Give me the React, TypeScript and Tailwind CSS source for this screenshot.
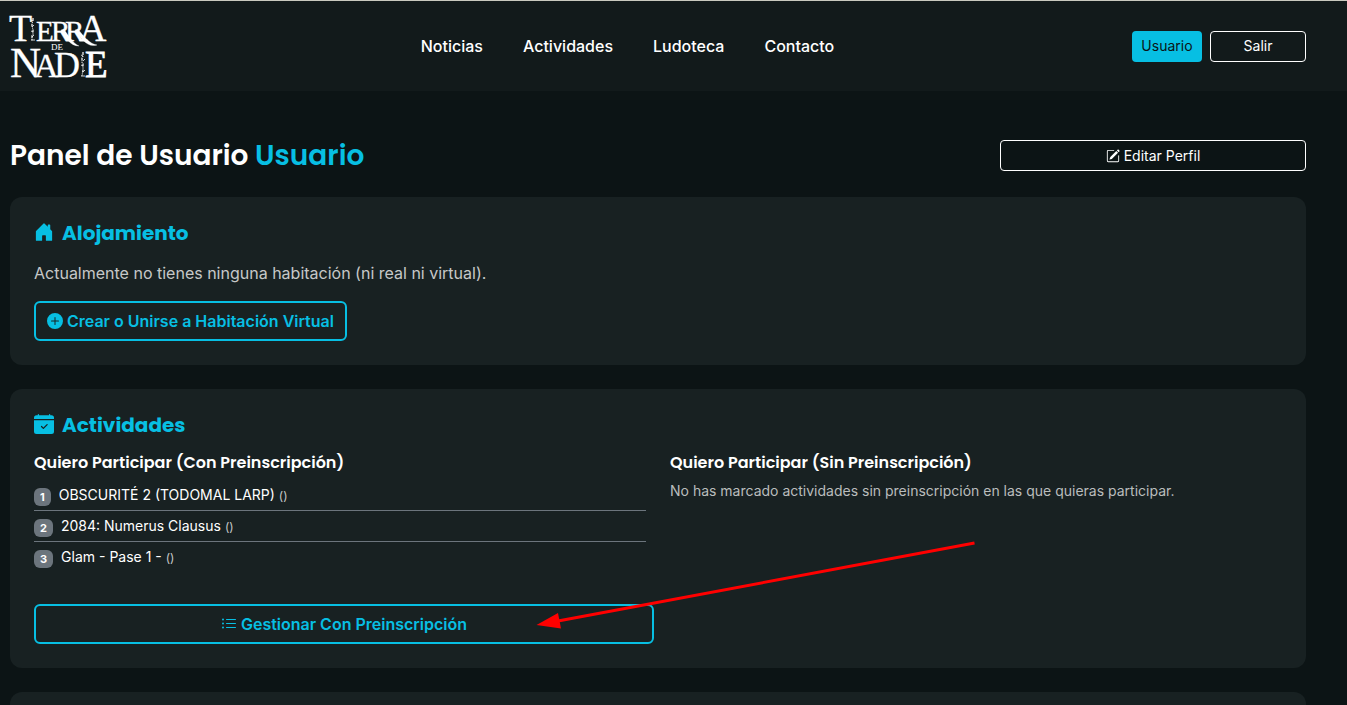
import type { ReactNode } from 'react';
import {
  BsCalendarCheckFill,
  BsHouseDoorFill,
  BsListUl,
  BsPencilSquare,
  BsPlusCircleFill,
} from 'react-icons/bs';

const navLinks = ['Noticias', 'Actividades', 'Ludoteca', 'Contacto'];
const activities = ['OBSCURITÉ 2 (TODOMAL LARP)', '2084: Numerus Clausus', 'Glam - Pase 1 -'];

function Logo() {
  return (
    <svg
      width="97"
      height="66"
      viewBox="0 0 97 66"
      fill="#fff"
      stroke="#fff"
      strokeWidth="0.3"
      className="overflow-visible font-['Liberation_Serif',serif]"
      role="img"
      aria-label="Tierra de Nadie"
    >
      <text x="-1" y="28" fontSize="38">T</text>
      <text x="26" y="28" fontSize="29">E</text>
      <text x="41" y="28" fontSize="29">R</text>
      <text x="55" y="28" fontSize="29">R</text>
      <text x="69" y="28" fontSize="38">A</text>
      <text x="41" y="37" fontSize="9" strokeWidth="0">DE</text>
      <text x="0" y="64" fontSize="43">N</text>
      <text x="24" y="64" fontSize="34">A</text>
      <text x="44" y="64" fontSize="36">D</text>
      <text x="75" y="64" fontSize="37" strokeWidth="0.8">E</text>
      <path d="M51 17 C56 25 60 33 69 33 C63 30 59 24 54 16Z M65 17 C71 25 77 35 87 32 C80 31 74 24 68 16Z" />
      <path
        d="M23 5v3l-1 2v4l1 2v5l-1 2v5M73 39v4l-1 2v4l1 2v6l-1 6"
        fill="none"
        strokeWidth="1.2"
        strokeDasharray="3 1 1 1"
      />
      <path
        d="M21 7l2 1M24 12l-2 2M21 18l2 1M24 22l-2 2M21 27h4M71 42l2 1M75 46l-2 2M71 52l2 1M75 57l-2 2M71 63h4"
        fill="none"
        strokeWidth="0.8"
      />
    </svg>
  );
}

function Card({ children }: { children?: ReactNode }) {
  return <section className="rounded-xl bg-[#182122] p-6">{children}</section>;
}

function SectionTitle({ icon, children }: { icon: ReactNode; children: ReactNode }) {
  return (
    <h2 className="flex h-6 gap-2 pt-px font-['Poppins','Inter',sans-serif] text-xl leading-[22px] font-bold text-[#07bfe3]">
      {icon}
      {children}
    </h2>
  );
}

function OutlineButton({ icon, children }: { icon: ReactNode; children: ReactNode }) {
  return (
    <button
      type="button"
      className="flex h-10 items-center justify-center gap-1 rounded-md border-2 border-[#07bfe3] px-[11px] text-base font-semibold text-[#07bfe3]"
    >
      {icon}
      {children}
    </button>
  );
}

export default function App() {
  return (
    <div className="relative h-screen overflow-hidden bg-[#0c1415] font-['Inter',sans-serif] text-white">
      <header className="flex h-[91px] items-center justify-between border-t border-[#c9c9bf] bg-[#121a1b] pr-[41px] pl-[10px]">
        <a href="#" className="mr-4">
          <Logo />
        </a>
        <nav className="flex gap-10 text-base font-medium">
          {navLinks.map((label) => (
            <a key={label} href="#">{label}</a>
          ))}
        </nav>
        <div className="flex gap-2 text-sm">
          <button type="button" className="h-[31px] w-[70px] rounded bg-[#07bfe3] text-[#0c1415]">
            Usuario
          </button>
          <button type="button" className="h-[31px] w-24 rounded border border-white">
            Salir
          </button>
        </div>
      </header>

      <main className="flex flex-col gap-6 pt-[49px] pr-[41px] pl-[10px]">
        <div className="grid grid-cols-4 items-center gap-x-6 pb-[2px]">
          <h1 className="col-span-3 font-['Poppins','Inter',sans-serif] text-[28px] leading-[31px] font-semibold">
            Panel de Usuario <span className="text-[#07bfe3]">Usuario</span>
          </h1>
          <button
            type="button"
            className="flex h-[31px] items-center justify-center gap-1 rounded border border-white text-sm"
          >
            <BsPencilSquare size={14} />
            Editar Perfil
          </button>
        </div>

        <Card>
          <SectionTitle icon={<BsHouseDoorFill size={20} />}>Alojamiento</SectionTitle>
          <p className="my-4 text-base text-[#c6c8c8]">
            Actualmente no tienes ninguna habitación (ni real ni virtual).
          </p>
          <div className="flex">
            <OutlineButton icon={<BsPlusCircleFill size={16} />}>
              Crear o Unirse a Habitación Virtual
            </OutlineButton>
          </div>
        </Card>

        <Card>
          <SectionTitle icon={<BsCalendarCheckFill size={20} />}>Actividades</SectionTitle>
          <div className="mt-4 grid grid-cols-2 gap-6">
            <div>
              <h3 className="mb-2 font-['Poppins','Inter',sans-serif] text-base leading-[19px] font-semibold">
                Quiero Participar (Con Preinscripción)
              </h3>
              <ol className="divide-y divide-[#6c757d]">
                {activities.map((name, i) => (
                  <li key={name} className="flex items-end gap-2 py-1 text-sm leading-[22px]">
                    <span className="rounded-md bg-[#6c757d] px-[6px] text-[11px] leading-[18px] font-bold">
                      {i + 1}
                    </span>
                    <span>
                      {name} <small className="text-xs leading-none text-[#c6c8c8]">()</small>
                    </span>
                  </li>
                ))}
              </ol>
            </div>
            <div>
              <h3 className="mb-2 font-['Poppins','Inter',sans-serif] text-base leading-[19px] font-semibold">
                Quiero Participar (Sin Preinscripción)
              </h3>
              <p className="text-sm leading-[21px] text-[#babdbd]">
                No has marcado actividades sin preinscripción en las que quieras participar.
              </p>
            </div>
          </div>
          <div className="mt-8 grid grid-cols-2 gap-2">
            <OutlineButton icon={<BsListUl size={16} />}>Gestionar Con Preinscripción</OutlineButton>
          </div>
        </Card>

        <Card />
      </main>

      <svg
        className="pointer-events-none absolute top-[540px] left-[536px]"
        width="440"
        height="90"
        viewBox="0 0 440 90"
        aria-hidden="true"
      >
        <path d="M438.500 3 L22 81" stroke="#f00" strokeWidth="3" />
        <path d="M0.5 85 L22 73 L25 88.500Z" fill="#f00" />
      </svg>
    </div>
  );
}
